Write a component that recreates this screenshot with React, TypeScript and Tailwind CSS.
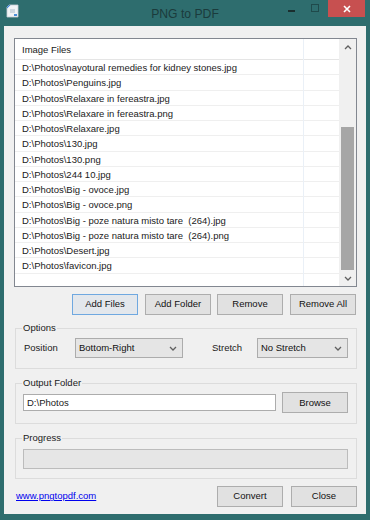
import React from "react";

const files = [
  "D:\\Photos\\nayotural remedies for kidney stones.jpg",
  "D:\\Photos\\Penguins.jpg",
  "D:\\Photos\\Relaxare in fereastra.jpg",
  "D:\\Photos\\Relaxare in fereastra.png",
  "D:\\Photos\\Relaxare.jpg",
  "D:\\Photos\\130.jpg",
  "D:\\Photos\\130.png",
  "D:\\Photos\\244 10.jpg",
  "D:\\Photos\\Big - ovoce.jpg",
  "D:\\Photos\\Big - ovoce.png",
  "D:\\Photos\\Big - poze natura misto tare  (264).jpg",
  "D:\\Photos\\Big - poze natura misto tare  (264).png",
  "D:\\Photos\\Desert.jpg",
  "D:\\Photos\\favicon.jpg",
];

function Btn({ children, focus, className = "" }: { children: React.ReactNode; focus?: boolean; className?: string }) {
  return (
    <div
      className={
        "flex h-[21px] w-[66px] items-center justify-center border text-[#111] " +
        (focus ? "border-[#6fa8e0] bg-[#e3e7ec] " : "border-[#adadad] bg-[#e1e1e1] ") +
        className
      }
    >
      {children}
    </div>
  );
}

function Chevron({ up }: { up?: boolean }) {
  return (
    <svg width="8" height="5" viewBox="0 0 8 5">
      <polyline
        points={up ? "1,4 4,1 7,4" : "1,1 4,4 7,1"}
        fill="none"
        stroke="#606060"
        strokeWidth="1.3"
      />
    </svg>
  );
}

function Select({ value, width }: { value: string; width: string }) {
  return (
    <div className={"flex h-[20px] items-center justify-between border border-[#acacac] bg-[#e5e5e5] pl-[3px] pr-[5px] text-[#111] " + width}>
      <span>{value}</span>
      <Chevron />
    </div>
  );
}

export default function App() {
  return (
    <div
      className="flex h-[520px] w-[370px] flex-col bg-[#2e6d6e] text-[9.5px]"
      style={{ fontFamily: '"Liberation Sans", Arial, sans-serif' }}
    >
      {/* Title bar */}
      <div className="relative flex h-[26px] items-center">
        <svg className="ml-[6px] mt-[-4px]" width="13" height="14" viewBox="0 0 13 14">
          <path d="M3 1 H12 V13 H1 V3 Z" fill="#f2f4f6" stroke="#c9d1d8" strokeWidth="0.8" />
          <path d="M1 3 L3 1 L4.5 1 L1 4.5 Z" fill="#2f7ad1" />
          <path d="M4 6 H9 M4 8 H9" stroke="#9db0c2" strokeWidth="0.8" />
          <path d="M8 10 h3 v2 h-3z" fill="#4a8fd8" />
        </svg>
        <div className="absolute left-0 right-0 top-[5px] text-center text-[12.2px] text-[#1b3b3c]">PNG to PDF</div>
        <div className="absolute left-[288px] top-[10px] h-[2px] w-[7px] bg-[#1a2e2e]" />
        <div className="absolute left-[311px] top-[4px] h-[8px] w-[8px] border border-[#1f4a4b]" />
        <div className="absolute right-[5px] top-0 flex h-[17px] w-[37px] items-center justify-center bg-[#c75050]">
          <svg width="8" height="8" viewBox="0 0 8 8">
            <path d="M1 1 L7 7 M7 1 L1 7" stroke="#fff" strokeWidth="1.6" />
          </svg>
        </div>
      </div>

      {/* Client */}
      <div className="mx-[4px] mb-[6px] flex flex-1 flex-col bg-[#f0f0f0] text-[#1a1a1a]">
        {/* List */}
        <div className="ml-[10px] mt-[12px] flex h-[249px] w-[343px] border border-[#828790] bg-white">
          <div className="relative flex-1 overflow-hidden">
            <div className="flex h-[21px] items-center border-b border-[#e5e5e5] pl-[7px] pt-[2px]">Image Files</div>
            {files.map((f) => (
              <div key={f} className="flex h-[15.25px] items-center whitespace-pre border-b border-[#efefef] pl-[7px] pt-[2px]">
                {f}
              </div>
            ))}
            <div className="absolute bottom-0 top-0 left-[288px] w-px bg-[#eaf0f7]" />
          </div>
          <div className="flex w-[17px] flex-col items-center bg-[#f0f0f0]">
            <div className="flex h-[17px] items-center justify-center">
              <Chevron up />
            </div>
            <div className="h-[71px]" />
            <div className="h-[143px] w-[13px] bg-[#a6a6a6]" />
            <div className="flex flex-1 items-center justify-center">
              <Chevron />
            </div>
          </div>
        </div>

        {/* Buttons */}
        <div className="mt-[7px] flex justify-end pr-[10px]">
          <Btn focus>Add Files</Btn>
          <Btn className="ml-[7px]">Add Folder</Btn>
          <Btn className="ml-[6px]">Remove</Btn>
          <Btn className="ml-[7px]">Remove All</Btn>
        </div>

        {/* Options */}
        <fieldset className="ml-[11px] mt-[6px] h-[48px] w-[342px] border border-[#dcdcdc] px-0">
          <legend className="ml-[6px] px-[1px] text-[#1a1a1a]">Options</legend>
          <div className="mt-[3px] flex items-center">
            <span className="ml-[8px] w-[51px]">Position</span>
            <Select value="Bottom-Right" width="w-[108px]" />
            <span className="ml-[29px] w-[45px]">Stretch</span>
            <Select value="No Stretch" width="w-[91px]" />
          </div>
        </fieldset>

        {/* Output folder */}
        <fieldset className="ml-[11px] mt-[7px] h-[48px] w-[342px] border border-[#dcdcdc] px-0">
          <legend className="ml-[6px] px-[1px]">Output Folder</legend>
          <div className="mt-[2px] flex items-center">
            <div className="ml-[7px] flex h-[17px] w-[253px] items-center border border-[#acacac] bg-white pl-[3px]">D:\Photos</div>
            <Btn className="ml-[6px]">Browse</Btn>
          </div>
        </fieldset>

        {/* Progress */}
        <fieldset className="ml-[11px] mt-[7px] h-[48px] w-[342px] border border-[#dcdcdc] px-0">
          <legend className="ml-[6px] px-[1px]">Progress</legend>
          <div className="ml-[7px] mt-[4px] h-[20px] w-[325px] border border-[#bcbcbc] bg-[#e6e6e6]" />
        </fieldset>

        {/* Bottom */}
        <div className="mt-[7px] flex items-center">
          <span className="ml-[12px] text-[#0000ee] underline">www.pngtopdf.com</span>
          <div className="flex-1" />
          <Btn>Convert</Btn>
          <Btn className="ml-[8px] mr-[9px]">Close</Btn>
        </div>
      </div>
    </div>
  );
}
